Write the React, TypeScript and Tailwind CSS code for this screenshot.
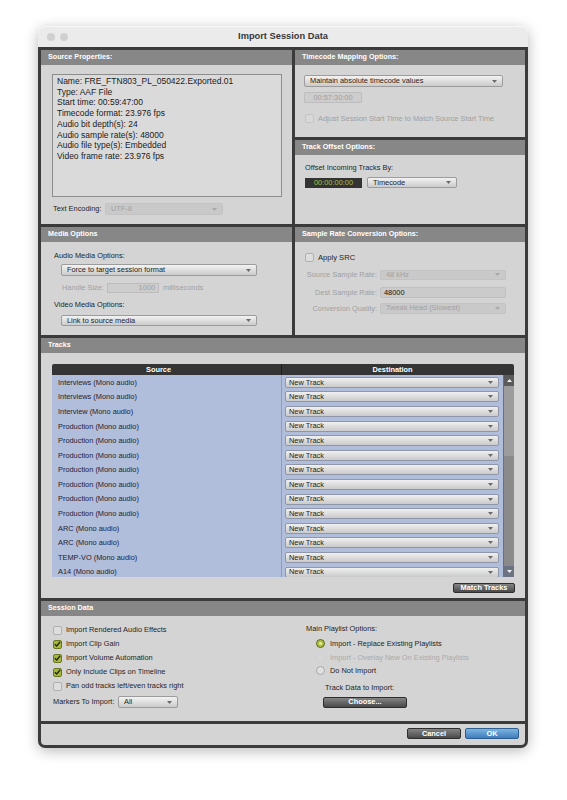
import React from "react";

const Arrow = ({ c = "#6a6a6a" }: { c?: string }) => (
  <svg width="5" height="3" viewBox="0 0 5 3" className="shrink-0">
    <path d="M0 0H5L2.5 3Z" fill={c} />
  </svg>
);

function Select({
  text,
  className,
  disabled,
}: {
  text: string;
  className: string;
  disabled?: boolean;
}) {
  return (
    <div
      className={
        "flex items-center justify-between pl-[5px] pr-[5px] rounded-[2px] border text-[7.4px] " +
        (disabled
          ? "bg-[#c9c9c9] border-[#c3c3c3] text-[#a2a2a2] "
          : "bg-linear-to-b from-[#f3f3f3] to-[#cbcbcb] border-[#9c9c9c] text-[#1e1e1e] ") +
        className
      }
    >
      <span className="leading-none">{text}</span>
      <Arrow c={disabled ? "#a8a8a8" : "#6a6a6a"} />
    </div>
  );
}

const Header = ({ children }: { children: React.ReactNode }) => (
  <div className="h-[15px] shrink-0 bg-[#878787] px-[7px] flex items-center text-white font-bold text-[7.2px]">
    {children}
  </div>
);

const Check = ({ checked }: { checked?: boolean }) =>
  checked ? (
    <div className="w-[9px] h-[9px] shrink-0 rounded-[2px] bg-[#a8b83c] border border-[#6b7622] flex items-center justify-center">
      <svg width="7" height="6" viewBox="0 0 7 6">
        <path d="M0.8 3.2L2.7 5L6.2 0.8" stroke="#26290f" strokeWidth="1.4" fill="none" />
      </svg>
    </div>
  ) : (
    <div className="w-[9px] h-[9px] shrink-0 rounded-[2px] bg-[#dedede] border border-[#b0b0b0]" />
  );

const Radio = ({ on, dim }: { on?: boolean; dim?: boolean }) =>
  on ? (
    <div className="w-[9px] h-[9px] shrink-0 rounded-full bg-[#aebe42] border border-[#5d6820] flex items-center justify-center">
      <div className="w-[3px] h-[3px] rounded-full bg-[#e3ec9a]" />
    </div>
  ) : dim ? (
    <div className="w-[9px] h-[9px] shrink-0 rounded-full bg-[#d6d6d6] border border-[#d0d0d0]" />
  ) : (
    <div className="w-[9px] h-[9px] shrink-0 rounded-full bg-[#e0e0e0] border border-[#a8a8a8]" />
  );

const DarkButton = ({ text, className }: { text: string; className: string }) => (
  <div
    className={
      "flex items-center justify-center rounded-[2px] border border-[#2e2e2e] bg-linear-to-b from-[#858585] to-[#4a4a4a] text-white font-bold text-[7.4px] " +
      className
    }
  >
    {text}
  </div>
);

const tracks = [
  "Interviews (Mono audio)",
  "Interviews (Mono audio)",
  "Interview (Mono audio)",
  "Production (Mono audio)",
  "Production (Mono audio)",
  "Production (Mono audio)",
  "Production (Mono audio)",
  "Production (Mono audio)",
  "Production (Mono audio)",
  "Production (Mono audio)",
  "ARC (Mono audio)",
  "ARC (Mono audio)",
  "TEMP-VO (Mono audio)",
  "A14 (Mono audio)",
];

const info = [
  "Name: FRE_FTN803_PL_050422.Exported.01",
  "Type: AAF File",
  "Start time: 00:59:47:00",
  "Timecode format: 23.976 fps",
  "Audio bit depth(s): 24",
  "Audio sample rate(s): 48000",
  "Audio file type(s): Embedded",
  "Video frame rate: 23.976 fps",
];

export default function App() {
  return (
    <div className="min-h-[800px] bg-white pt-[26px] pl-[38px] font-['Liberation_Sans',Arial,sans-serif] text-[#1f1f1f]">
      <div className="w-[490px] rounded-[8px] shadow-[0_3px_14px_rgba(0,0,0,0.28)]">
        {/* Title bar */}
        <div className="h-[21px] rounded-t-[8px] bg-[#ebebeb] border-t border-[#f6f6f6] flex items-center relative">
          <div className="flex gap-[5px] pl-[9px]">
            <div className="w-[8px] h-[8px] rounded-full bg-[#d0d0d0]" />
            <div className="w-[8px] h-[8px] rounded-full bg-[#d0d0d0]" />
          </div>
          <div className="flex-1 text-center font-bold text-[9.3px] text-[#383838] pr-[30px]">
            Import Session Data
          </div>
        </div>

        {/* Body */}
        <div className="bg-[#3b3b3b] p-[3px] flex flex-col gap-[3px] rounded-b-[7px]">
          {/* Row 1 */}
          <div className="flex gap-[3px] h-[174px]">
            <div className="w-[251px] flex flex-col bg-[#d4d4d4]">
              <Header>Source Properties:</Header>
              <div className="flex-1 flex flex-col pt-[9px]">
                <div className="ml-[11px] w-[230px] h-[123px] bg-[#dadada] border border-[#8d8d8d] pl-[4px] pt-[1px]">
                  {info.map((l, i) => (
                    <div key={i} className="text-[8.5px] leading-[10.7px] text-[#1a1a1a] whitespace-nowrap">
                      {l}
                    </div>
                  ))}
                </div>
                <div className="flex items-center mt-[6px] pl-[12px]">
                  <span className="text-[7.4px] w-[52px]">Text Encoding:</span>
                  <Select text="UTF-8" disabled className="w-[118px] h-[12px]" />
                </div>
              </div>
            </div>
            <div className="w-[230px] flex flex-col gap-[3px]">
              <div className="h-[87px] flex flex-col bg-[#d4d4d4]">
                <Header>Timecode Mapping Options:</Header>
                <div className="flex-1 flex flex-col pl-[9px] pt-[10px]">
                  <Select text="Maintain absolute timecode values" className="w-[199px] h-[12px]" />
                  <div className="mt-[5px] w-[58px] h-[11px] bg-[#cdcdcd] border border-[#bdbdbd] rounded-[1px] flex items-center justify-center text-[7.4px] text-[#a0a0a0]">
                    00:57:30:00
                  </div>
                  <div className="mt-[10px] flex items-center gap-[4px] pl-[1px]">
                    <div className="w-[9px] h-[9px] rounded-[2px] border border-[#c4c4c4] bg-[#d8d8d8]" />
                    <span className="text-[7.4px] text-[#a0a0a0]">
                      Adjust Session Start Time to Match Source Start Time
                    </span>
                  </div>
                </div>
              </div>
              <div className="flex-1 flex flex-col bg-[#d4d4d4]">
                <Header>Track Offset Options:</Header>
                <div className="flex-1 flex flex-col pl-[10px] pt-[8px]">
                  <div className="text-[7.4px] leading-[9px]">Offset Incoming Tracks By:</div>
                  <div className="mt-[5px] flex items-center gap-[5px]">
                    <div className="w-[57px] h-[10px] bg-[#333333] flex items-center justify-center text-[7.4px] text-[#a7c04a]">
                      00:00:00:00
                    </div>
                    <Select text="Timecode" className="w-[90px] h-[11px]" />
                  </div>
                </div>
              </div>
            </div>
          </div>

          {/* Row 2 */}
          <div className="flex gap-[3px] h-[108px]">
            <div className="w-[251px] flex flex-col bg-[#d4d4d4]">
              <Header>Media Options</Header>
              <div className="flex-1 flex flex-col">
                <div className="mt-[9px] ml-[13px] h-[9px] leading-[9px] text-[7.4px]">Audio Media Options:</div>
                <Select text="Force to target session format" className="mt-[4px] ml-[20px] w-[196px] h-[12px]" />
                <div className="mt-[7px] ml-[21px] h-[10px] flex items-center">
                  <span className="w-[45px] text-[7.4px] text-[#a0a0a0]">Handle Size:</span>
                  <div className="w-[52px] h-[10px] bg-[#cdcdcd] border border-[#bdbdbd] flex items-center justify-end pr-[3px] text-[7.4px] text-[#a0a0a0]">
                    1000
                  </div>
                  <span className="ml-[4px] text-[7.4px] text-[#a0a0a0]">milliseconds</span>
                </div>
                <div className="mt-[7px] ml-[13px] h-[9px] leading-[9px] text-[7.4px]">Video Media Options:</div>
                <Select text="Link to source media" className="mt-[6px] ml-[20px] w-[196px] h-[11px]" />
              </div>
            </div>
            <div className="w-[230px] flex flex-col bg-[#d4d4d4]">
              <Header>Sample Rate Conversion Options:</Header>
              <div className="flex-1 flex flex-col">
                <div className="mt-[10px] ml-[10px] flex items-center gap-[4px]">
                  <Check />
                  <span className="text-[7.6px] text-[#1e1e1e]">Apply SRC</span>
                </div>
                <div className="mt-[6px] flex items-center gap-[3px]">
                  <span className="w-[82px] text-right text-[7.4px] text-[#a0a0a0]">Source Sample Rate:</span>
                  <Select text="48 kHz" disabled className="w-[126px] h-[10px]" />
                </div>
                <div className="mt-[6px] flex items-center gap-[3px]">
                  <span className="w-[82px] text-right text-[7.4px] text-[#a0a0a0]">Dest Sample Rate:</span>
                  <div className="w-[126px] h-[11px] bg-[#cbcbcb] border border-[#c0c0c0] rounded-[2px] pl-[3px] flex items-center text-[7.4px] text-[#111]">
                    48000
                  </div>
                </div>
                <div className="mt-[5px] flex items-center gap-[3px]">
                  <span className="w-[82px] text-right text-[7.4px] text-[#a0a0a0]">Conversion Quality:</span>
                  <Select text="Tweak Head (Slowest)" disabled className="w-[126px] h-[11px]" />
                </div>
              </div>
            </div>
          </div>

          {/* Tracks */}
          <div className="h-[260px] flex flex-col bg-[#d4d4d4]">
            <Header>Tracks</Header>
            <div className="flex-1 flex flex-col">
              <div className="mt-[11px] ml-[11px] w-[462px] flex flex-col">
                <div className="h-[11px] bg-[#353535] rounded-t-[2px] flex text-white font-bold text-[7.4px]">
                  <div className="w-[230px] flex items-center justify-center pr-[16px] border-r border-[#1f1f1f]">Source</div>
                  <div className="w-[221px] flex items-center justify-center">Destination</div>
                  <div className="w-[11px]" />
                </div>
                <div className="h-[202px] flex overflow-hidden">
                  <div className="w-[451px] flex flex-col shrink-0">
                    {tracks.map((t, i) => (
                      <div key={i} className="h-[14.6px] shrink-0 flex bg-[#b1bedb]">
                        <div className="w-[230px] border-r border-[#8e9cbd] pl-[6px] flex items-center text-[7.4px] text-[#1e2230]">
                          {t}
                        </div>
                        <div className="flex-1 flex items-center pl-[3px] pr-[4px]">
                          <div className="flex-1 h-[11px] rounded-[2px] border border-[#8f96a8] bg-linear-to-b from-[#f0f0f0] to-[#cacaca] flex items-center justify-between pl-[3px] pr-[5px] text-[7.4px] text-[#222]">
                            <span className="leading-none">New Track</span>
                            <Arrow />
                          </div>
                        </div>
                      </div>
                    ))}
                  </div>
                  <div className="w-[11px] flex flex-col bg-[#8a8a8a] border-l border-[#6f6f6f]">
                    <div className="h-[11px] bg-[#5a5a5a] flex items-center justify-center">
                      <svg width="5" height="3" viewBox="0 0 5 3"><path d="M0 3H5L2.5 0Z" fill="#f0f0f0" /></svg>
                    </div>
                    <div className="h-[70px] bg-[#9c9c9c]" />
                    <div className="flex-1" />
                    <div className="h-[11px] bg-[#6c7282] flex items-center justify-center">
                      <svg width="5" height="3" viewBox="0 0 5 3"><path d="M0 0H5L2.5 3Z" fill="#f0f0f0" /></svg>
                    </div>
                  </div>
                </div>
              </div>
              <div className="mt-[6px] flex justify-end pr-[10px]">
                <DarkButton text="Match Tracks" className="w-[62px] h-[10px]" />
              </div>
            </div>
          </div>

          {/* Session Data */}
          <div className="h-[120px] flex flex-col bg-[#d4d4d4]">
            <Header>Session Data</Header>
            <div className="flex-1 flex">
              <div className="w-[265px] flex flex-col pt-[7px] pl-[12px]">
                {[
                  ["Import Rendered Audio Effects", false],
                  ["Import Clip Gain", true],
                  ["Import Volume Automation", true],
                  ["Only Include Clips on Timeline", true],
                  ["Pan odd tracks left/even tracks right", false],
                ].map(([l, c], i) => (
                  <div key={i} className="h-[14px] flex items-center gap-[4px]">
                    <Check checked={c as boolean} />
                    <span className="text-[7.4px]">{l as string}</span>
                  </div>
                ))}
                <div className="mt-[3px] h-[12px] flex items-center">
                  <span className="w-[65px] text-[7.4px]">Markers To Import:</span>
                  <Select text="All" className="w-[60px] h-[12px]" />
                </div>
              </div>
              <div className="flex-1 flex flex-col pt-[8px]">
                <div className="h-[9px] leading-[9px] text-[7.4px]">Main Playlist Options:</div>
                <div className="mt-[4px] ml-[10px] h-[13.5px] flex items-center gap-[5px]">
                  <Radio on />
                  <span className="text-[7.4px]">Import - Replace Existing Playlists</span>
                </div>
                <div className="ml-[10px] h-[13.5px] flex items-center gap-[5px]">
                  <Radio dim />
                  <span className="text-[7.4px] text-[#aaaaaa]">Import - Overlay New On Existing Playlists</span>
                </div>
                <div className="ml-[10px] h-[13.5px] flex items-center gap-[5px]">
                  <Radio />
                  <span className="text-[7.4px]">Do Not Import</span>
                </div>
                <div className="mt-[5px] ml-[19px] h-[9px] leading-[9px] text-[7.4px]">Track Data to Import:</div>
                <DarkButton text="Choose..." className="mt-[5px] ml-[17px] w-[84px] h-[11px]" />
              </div>
            </div>
          </div>

          {/* Bottom bar */}
          <div className="h-[21px] bg-[#d4d4d4] rounded-b-[4px] flex justify-end items-start pt-[4px] pr-[6px] gap-[4px]">
            <DarkButton text="Cancel" className="w-[54px] h-[11px]" />
            <div className="w-[54px] h-[11px] rounded-[2px] border border-[#2f5f91] bg-linear-to-b from-[#7db3e0] to-[#3f7dbd] flex items-center justify-center text-white font-bold text-[7.4px]">
              OK
            </div>
          </div>
        </div>
      </div>
    </div>
  );
}
